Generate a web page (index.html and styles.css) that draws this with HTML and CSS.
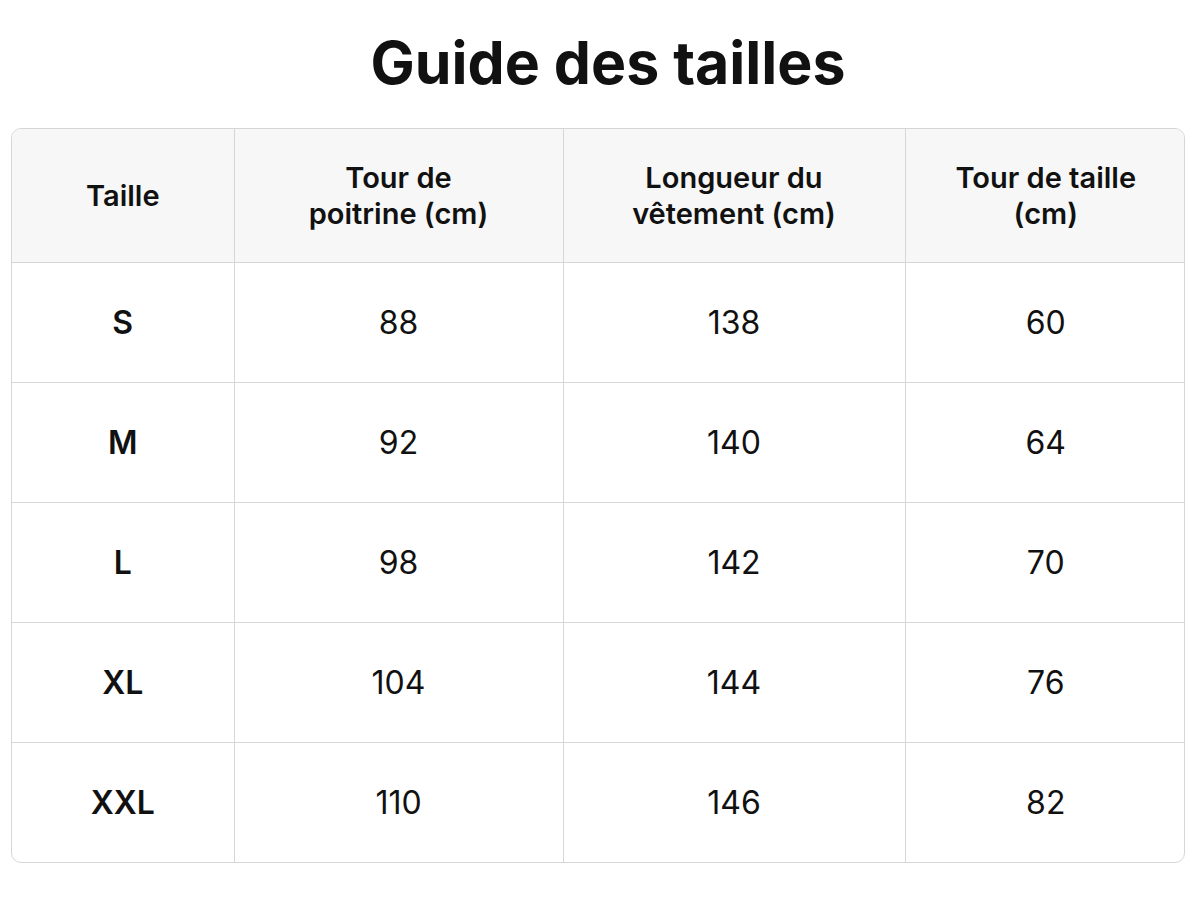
FILE: index.html
```html
<!DOCTYPE html>
<html lang="fr">
<head>
<meta charset="utf-8">
<title>Guide des tailles</title>
<link rel="stylesheet" href="styles.css">
</head>
<body>
<main class="page">
  <h1 class="title">Guide des tailles</h1>
  <div class="table-wrap">
    <table class="sizes">
      <colgroup>
        <col class="c1"><col class="c2"><col class="c3"><col class="c4">
      </colgroup>
      <thead>
        <tr>
          <th>Taille</th>
          <th>Tour de<br>poitrine (cm)</th>
          <th>Longueur du<br>vêtement (cm)</th>
          <th>Tour de taille<br>(cm)</th>
        </tr>
      </thead>
      <tbody>
        <tr><td class="size">S</td><td>88</td><td>138</td><td>60</td></tr>
        <tr><td class="size">M</td><td>92</td><td>140</td><td>64</td></tr>
        <tr><td class="size">L</td><td>98</td><td>142</td><td>70</td></tr>
        <tr><td class="size">XL</td><td>104</td><td>144</td><td>76</td></tr>
        <tr><td class="size">XXL</td><td>110</td><td>146</td><td>82</td></tr>
      </tbody>
    </table>
  </div>
</main>
</body>
</html>
```
FILE: styles.css
```css
html, body {
  margin: 0;
  padding: 0;
  background: #ffffff;
}
body {
  font-family: Inter, "Liberation Sans", Arial, sans-serif;
  color: #111111;
}
.page {
  width: 1174px;
  margin: 0 0 0 11px;
  padding-top: 28px;
}
.title {
  margin: 0 0 30px 0;
  padding-left: 20px;
  text-align: center;
  font-size: 59px;
  line-height: 70px;
  font-weight: 700;
  letter-spacing: 0;
}
.table-wrap {
  border: 1.5px solid #d6d6d6;
  border-radius: 10px;
  overflow: hidden;
}
.sizes {
  width: 100%;
  border-collapse: collapse;
  table-layout: fixed;
}
.c1 { width: 222px; }
.c2 { width: 329px; }
.c3 { width: 342px; }
.c4 { width: 281px; }
.sizes th, .sizes td {
  text-align: center;
  vertical-align: middle;
  border-right: 1.5px solid #d6d6d6;
  border-bottom: 1.5px solid #d6d6d6;
  padding: 0;
}
.sizes th:last-child, .sizes td:last-child { border-right: none; }
.sizes tbody tr:last-child td { border-bottom: none; }
.sizes thead th {
  background: #f7f7f7;
  height: 133px;
  font-size: 29px;
  line-height: 36px;
  font-weight: 600;
}
.sizes tbody td {
  height: 119px;
  font-size: 32px;
  font-weight: 400;
}
.sizes tbody td.size {
  font-weight: 600;
}
```
